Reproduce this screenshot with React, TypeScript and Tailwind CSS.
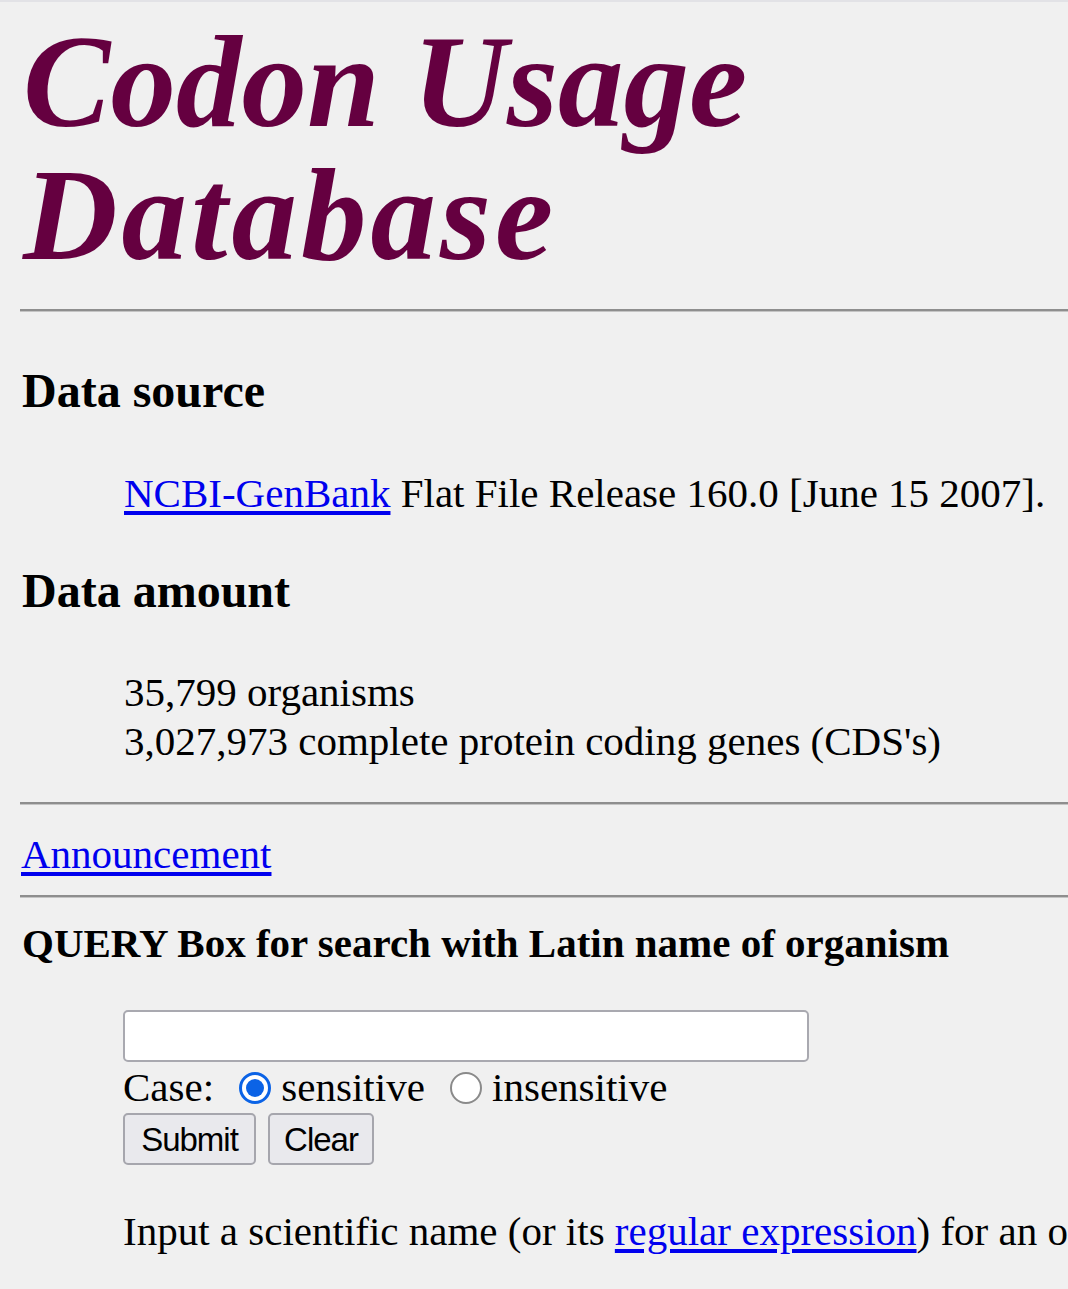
const serif = "font-['Liberation_Serif',serif]"

function Rule({ className = '' }: { className?: string }) {
  return <div className={`h-[3px] border-t-2 border-t-[#8e8e8e] border-b border-b-[#c4c4c4] ${className}`} />
}

function Radio({ checked }: { checked?: boolean }) {
  return (
    <span
      className={`inline-block overflow-hidden w-[32px] h-[32px] ml-[15px] mr-[10px] align-[-3px] rounded-full bg-white ${
        checked ? 'border-[3px] border-[#0b63e6] p-[4px]' : 'border-[2px] border-[#8a8a8a]'
      }`}
    >
      {checked && <span className="block w-full h-full rounded-full bg-[#0b63e6]" />}
    </span>
  )
}

export default function App() {
  return (
    <div className={`min-h-screen bg-[#f0f0f0] overflow-hidden whitespace-nowrap text-black border-t-2 border-t-[#e2e2e6] ${serif}`}>
      <div className="pl-[20px]">
        {/* Title */}
        <h1 className="mt-[13px] pl-[3px] text-[131px] leading-[133px] italic font-bold text-[#650040]">
          Codon Usage
          <br />
          <span className="tracking-[4px]">Database</span>
        </h1>

        <Rule className="mt-[28px]" />

        <h3 className="mt-[51px] pl-[2px] text-[48px] leading-[55px] font-bold">Data source</h3>
        <div className="mt-[52px] pl-[104px] text-[41px] leading-[46px]">
          <a href="#" className="text-[#0000ee] underline underline-offset-[4px]">NCBI-GenBank</a> Flat File Release 160.0 [June 15 2007].
        </div>

        <h3 className="mt-[47px] pl-[2px] text-[48px] leading-[55px] font-bold">Data amount</h3>
        <div className="mt-[50px] pl-[104px] text-[41px] leading-[49px]">
          <div>35,799 organisms</div>
          <div>3,027,973 complete protein coding genes (CDS's)</div>
        </div>

        <Rule className="mt-[36px]" />

        <div className="mt-[26px] pl-[1px] text-[41px] leading-[46px]">
          <a href="#" className="text-[#0000ee] underline underline-offset-[4px]">Announcement</a>
        </div>

        <Rule className="mt-[18px]" />

        <h4 className="mt-[22px] pl-[2px] text-[41px] leading-[46px] font-bold">
          QUERY Box for search with Latin name of organism
        </h4>

        <div className="mt-[44px] pl-[103px]">
          <input
            type="text"
            className="block w-[686px] h-[52px] bg-white border-2 border-[#a9a9b0] rounded-[5px] outline-none"
          />
          <div className="mt-[2px] text-[41px] leading-[46px]">
            Case:
            {' '}
            <Radio checked />sensitive
            {' '}
            <Radio />insensitive
          </div>
          <div className="mt-[3px] flex gap-[12px] font-['Liberation_Sans',Arial,sans-serif] text-[33px]">
            <button className="w-[133px] h-[52px] bg-[#e9e9ed] border-2 border-[#a6a6ad] rounded-[5px] tracking-[-1px]">Submit</button>
            <button className="w-[106px] h-[52px] bg-[#e9e9ed] border-2 border-[#a6a6ad] rounded-[5px] tracking-[-1px]">Clear</button>
          </div>
          <div className="mt-[43px] text-[41px] leading-[46px]">
            Input a scientific name (or its{' '}
            <a href="#" className="text-[#0000ee] underline underline-offset-[4px]">regular expression</a>) for an organism of interest.
          </div>
        </div>
      </div>
    </div>
  )
}
